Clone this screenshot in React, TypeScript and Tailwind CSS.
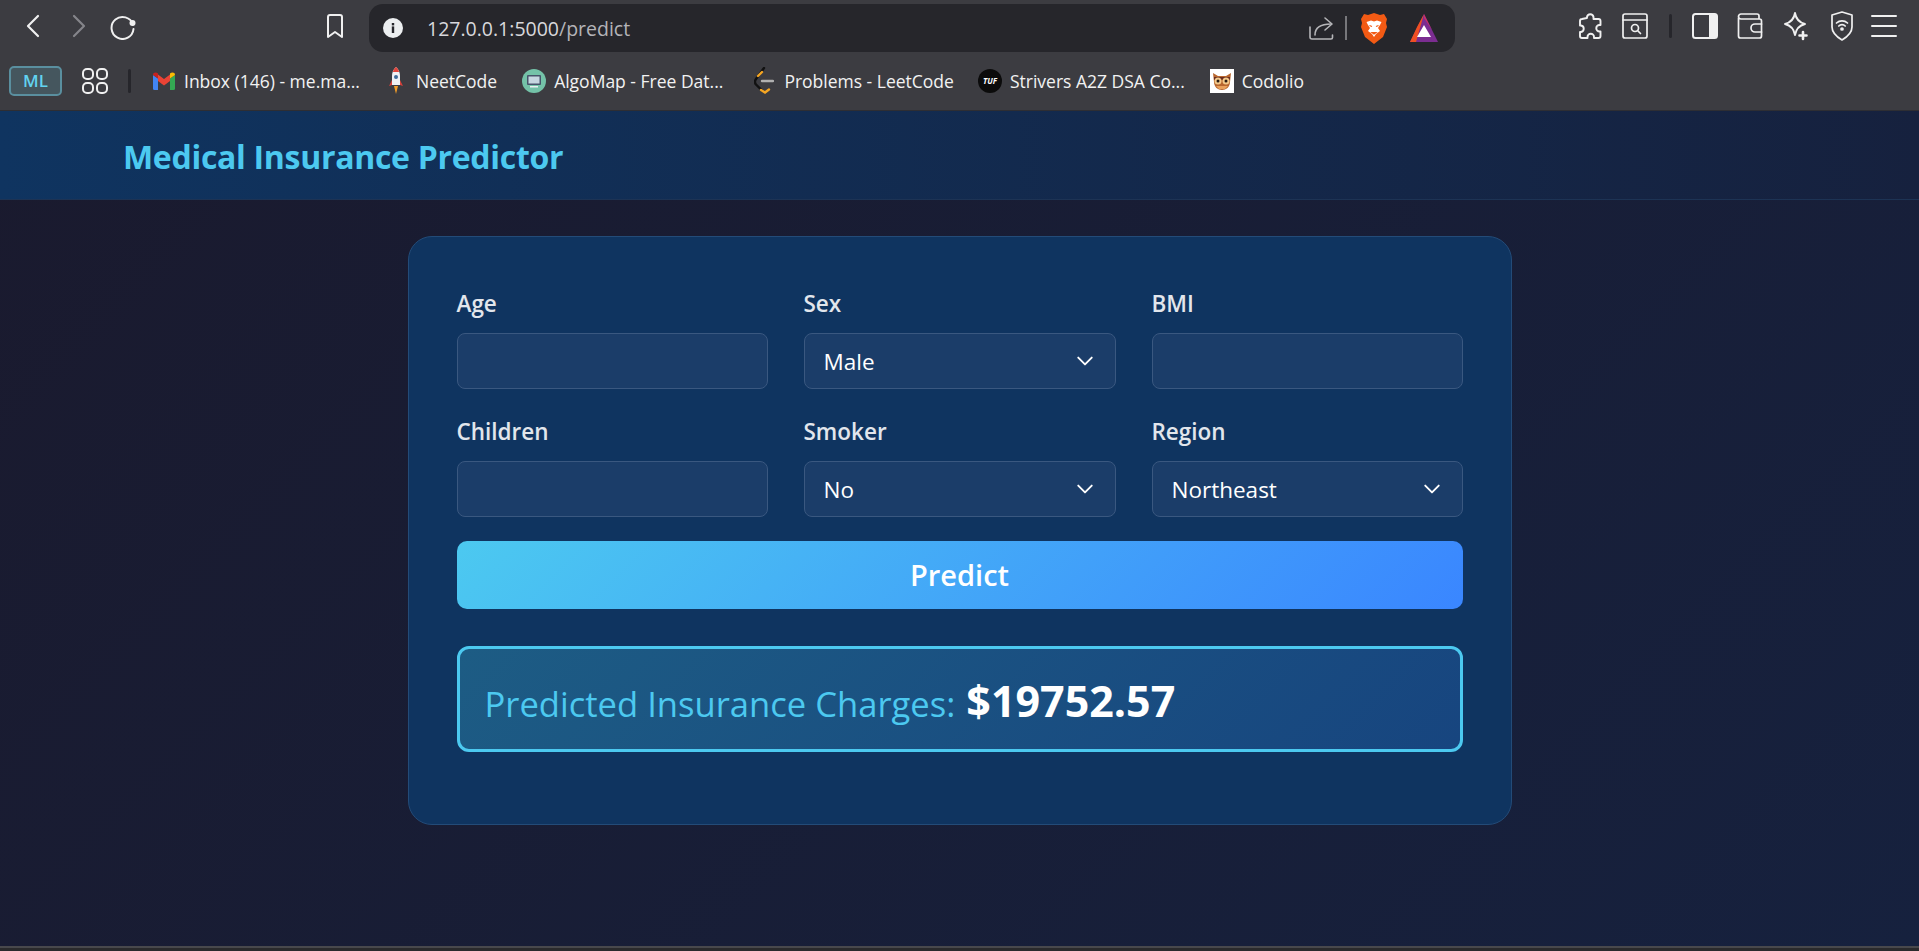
const Chevron = () => (
  <svg width="18" height="18" viewBox="0 0 16 16" fill="none" stroke="#fff" strokeWidth="1.7" strokeLinecap="round" strokeLinejoin="round" className="shrink-0"><path d="M2 5 8 11l6-6" /></svg>
);

function Field({ label, value }: { label: string; value?: string }) {
  return (
    <div className="flex flex-col">
      <label className="h-[29px] text-[22.5px] leading-[29px] font-semibold text-[#e2e6ec] mb-[15px]">{label}</label>
      <div className="h-[56px] rounded-[8px] border border-[#3a5880] bg-[#1b3d69] flex items-center justify-between pl-[19px] pr-[21px]">
        {value ? <span className="text-[22.5px] text-white mt-[2px]">{value}</span> : null}
        {value ? <Chevron /> : null}
      </div>
    </div>
  );
}

function Bookmark({ icon, text, className }: { icon: React.ReactNode; text: string; className: string }) {
  return (
    <div className={`flex items-center gap-[8px] shrink-0 ${className}`}>
      <span className="w-[24px] h-[24px] flex items-center justify-center shrink-0">{icon}</span>
      <span className="text-[17.5px] text-[#f2f2f2] whitespace-nowrap">{text}</span>
    </div>
  );
}

const S = { fill: "none", stroke: "#f0f0f0", strokeWidth: 2, strokeLinecap: "round" as const, strokeLinejoin: "round" as const };

export default function App() {
  return (
    <div className="w-[1919px] h-[951px] overflow-hidden flex flex-col bg-[#1a1c33] font-['Open_Sans','Noto_Sans',sans-serif]">
      {/* browser toolbar */}
      <div className="h-[52px] bg-[#3c3c41] flex items-center shrink-0">
        <div className="flex items-center pl-[22px]">
          <svg width="22" height="26" viewBox="0 0 22 26" {...S} strokeWidth={2.2}><path d="M16 3 6 13l10 10" /></svg>
          <svg width="22" height="26" viewBox="0 0 22 26" {...S} stroke="#85858a" strokeWidth={2.2} className="ml-[24px]"><path d="m6 3 10 10L6 23" /></svg>
          <svg width="28" height="28" viewBox="0 0 28 28" {...S} strokeWidth={2} className="ml-[19px]"><path d="M24 12.500A11 11 0 1 0 24.500 17" /><circle cx="23.500" cy="11" r="3" fill="#f0f0f0" stroke="none" /></svg>
          <svg width="20" height="26" viewBox="0 0 20 26" {...S} strokeWidth={2} className="ml-[188px]"><path d="M3 4a2 2 0 0 1 2-2h10a2 2 0 0 1 2 2v20l-7-5-7 5z" /></svg>
        </div>
        <div className="ml-[24px] w-[1086px] h-[48px] mt-[4px] rounded-[14px] bg-[#26262b] flex items-center shrink-0">
          <svg width="20" height="20" viewBox="0 0 20 20" className="ml-[14px] shrink-0"><circle cx="10" cy="10" r="10" fill="#eceef0" /><rect x="8.800" y="8.400" width="2.400" height="6.600" fill="#26262b" /><rect x="8.800" y="5" width="2.400" height="2.400" fill="#26262b" /></svg>
          <span className="ml-[24px] text-[19.5px] text-[#d8d8dc] mt-[1px]">127.0.0.1:5000<span className="text-[#b4b4b8]">/predict</span></span>
          <div className="ml-auto flex items-center">
            <svg width="26" height="26" viewBox="0 0 26 26" fill="none" stroke="#b5b5b8" strokeWidth="1.6" strokeLinecap="round" strokeLinejoin="round"><path d="M2 12v10a2 2 0 0 0 2 2h19a1.500 1.500 0 0 0 1.500-1.500V20" /><path d="M7 20c0-7 5-11 16-11" /><path d="m17 3 7 6-7 6" /></svg>
            <div className="w-[2px] h-[24px] bg-[#77777b] ml-[11px]" />
            <svg width="26" height="31" viewBox="0 0 26 31" className="ml-[14px]"><path d="M13 0 19 2 23 1 26 6 25 10 26 14 22 24 13 31 4 24 0 14 1 10 0 6 3 1 7 2Z" fill="#f25a14" /><path d="M5.500 9 10 7.500l3 1 3-1L20.500 9 19 12l-2 3 2 3-4 3-2 3-2-3-4-3 2-3-2-3z" fill="#fff" /><path d="M8.500 12.500 11 13.500M17.500 12.500 15 13.500M11 19.500h4l-2 1.500z" stroke="#f25a14" strokeWidth="1.200" fill="#f25a14" /></svg>
            <svg width="28" height="28" viewBox="0 0 28 28" className="ml-[23px] mr-[17px]"><path d="M14 0 28 28H0Z" fill="#7b2d91" /><path d="M14 0 7 13 0 28h6l8-28Z" fill="#f04f23" /><path d="M14 0 22 16 14 4Z" fill="#c62f6a" /><path d="M14 11 21 23H7Z" fill="#fff" /></svg>
          </div>
        </div>
        <div className="flex items-center ml-[122px]">
          <svg width="26" height="28" viewBox="0 0 26 28" {...S} strokeWidth={1.9}><path d="M10 6V5a3.300 3.300 0 0 1 6.500 0v2h5a2 2 0 0 1 2 2v4h-1a3.200 3.200 0 0 0 0 6.500h1V24a2 2 0 0 1-2 2h-4.500v-1a3.200 3.200 0 0 0-6.500 0v1H5a2 2 0 0 1-2-2v-4h1a3.300 3.300 0 0 0 0-6.500H3V9a2 2 0 0 1 2-2z" /></svg>
          <svg width="26" height="28" viewBox="0 0 26 28" {...S} strokeWidth={1.7} className="ml-[19px]"><rect x="1" y="2" width="24" height="24" rx="2" /><path d="M1 8h24" /><circle cx="13" cy="16" r="3.500" /><path d="m16 19 2.500 2.500" /></svg>
          <div className="w-[3px] h-[24px] bg-[#26262b] ml-[21px] rounded-sm" />
          <svg width="26" height="28" viewBox="0 0 26 28" className="ml-[20px]"><rect x="1" y="2" width="24" height="24" rx="2.500" fill="none" stroke="#f0f0f0" strokeWidth="2" /><path d="M17 2h6a2 2 0 0 1 2 2v20a2 2 0 0 1-2 2h-6z" fill="#f0f0f0" /></svg>
          <svg width="26" height="28" viewBox="0 0 26 28" {...S} strokeWidth={1.7} className="ml-[19px]"><path d="M1.500 6v18a2 2 0 0 0 2 2h19a2 2 0 0 0 2-2V9a2 2 0 0 0-2-2H4A2.500 2.500 0 0 1 4 2h16a2 2 0 0 1 2 2v3" /><path d="M24.500 12H18a4 4 0 0 0 0 8h6.500" /></svg>
          <svg width="26" height="30" viewBox="0 0 26 30" {...S} strokeWidth={1.9} className="ml-[20px]"><path d="M12 2c1 6 4 9.500 10 11-6 1.500-9 5-10 11-1-6-4-9.500-10-11 6-1.500 9-5 10-11z" /><path d="M20 21v7M16.500 24.500h7" strokeWidth="2.600" /></svg>
          <svg width="24" height="30" viewBox="0 0 24 30" {...S} strokeWidth={1.7} className="ml-[21px]"><path d="M12 1 22 4v12c0 6-5 10-10 13C7 26 2 22 2 16V4z" /><path d="M6.500 12a8 8 0 0 1 11 0M8.800 15a4.500 4.500 0 0 1 6.400 0" /><circle cx="12" cy="18" r="1" fill="#f0f0f0" /></svg>
          <svg width="26" height="24" viewBox="0 0 26 24" {...S} strokeWidth={2} className="ml-[17px]"><path d="M1 2h24M1 12h24M1 22h24" /></svg>
        </div>
      </div>
      {/* bookmarks bar */}
      <div className="h-[59px] bg-[#3c3c41] border-b border-[#2e2e33] flex items-center shrink-0 pl-[9px]">
        <div className="w-[53px] h-[30px] rounded-[5px] border-2 border-[#5a8f9f] bg-[#45565e] flex items-center justify-center text-[17px] font-semibold text-[#62d3f0]">ML</div>
        <svg width="26" height="26" viewBox="0 0 26 26" fill="none" stroke="#f0f0f0" strokeWidth="2" className="ml-[20px]"><rect x="1" y="1" width="10" height="10" rx="4" /><rect x="15" y="1" width="10" height="10" rx="4" /><rect x="1" y="15" width="10" height="10" rx="4" /><rect x="15" y="15" width="10" height="10" rx="4" /></svg>
        <div className="w-[3px] h-[24px] bg-[#26262b] ml-[20px] rounded-sm" />
        <Bookmark className="ml-[21px]" text="Inbox (146) - me.ma..." icon={<svg width="22" height="18" viewBox="0 0 22 18"><path d="M0 16.500V3l5 3.500V18H1.500A1.500 1.500 0 0 1 0 16.500z" fill="#4285f4" /><path d="M17 18V6.500L22 3v13.500a1.500 1.500 0 0 1-1.500 1.500z" fill="#34a853" /><path d="M5 9V2.500l6 4.500 6-4.500V9l-6 4.500z" fill="#ea4335" /><path d="M17 6.500V1.500C18.500.2 22 0 22 3z" fill="#fbbc04" /><path d="M0 3C0 0 3.500.2 5 1.500v5z" fill="#c5221f" /></svg>} />
        <Bookmark className="ml-[24px]" text="NeetCode" icon={<svg width="16" height="28" viewBox="0 0 16 28"><path d="M8 0c3 2.500 4 6 4 9v9H4V9c0-3 1-6.500 4-9z" fill="#eef0f4" /><path d="M8 0c1.500 1.200 2.600 3 3.100 5H4.900C5.400 3 6.500 1.200 8 0z" fill="#e2453c" /><circle cx="8" cy="10" r="2" fill="#3d6b9a" /><path d="M4 13 1 19l3-1zM12 13l3 6-3-1z" fill="#d6403a" /><path d="M6 19h4l-2 8z" fill="#f39c27" /></svg>} />
        <Bookmark className="ml-[25px]" text="AlgoMap - Free Dat..." icon={<svg width="24" height="24" viewBox="0 0 24 24"><circle cx="12" cy="12" r="12" fill="#74c2a8" /><rect x="5" y="6" width="14" height="10" rx="1" fill="#46546a" /><rect x="6.500" y="7.500" width="11" height="7" fill="#c6d6e0" /><rect x="8" y="17" width="8" height="1.500" fill="#e8f0f0" /></svg>} />
        <Bookmark className="ml-[29px]" text="Problems - LeetCode" icon={<svg width="20" height="28" viewBox="0 0 20 28" fill="none" strokeLinecap="round"><path d="M10 1 2 12c-1.500 2-1.200 4 0 5.500l6 6" stroke="#111" strokeWidth="2.400" /><path d="M4 9l4-4M7 23l4 2.500 4-3" stroke="#f5a623" strokeWidth="2.400" /><path d="M8 14h11" stroke="#b0b0b0" strokeWidth="2.400" /></svg>} />
        <Bookmark className="ml-[24px]" text="Strivers A2Z DSA Co..." icon={<div className="w-[24px] h-[24px] rounded-full bg-[#0b0b0b] flex items-center justify-center text-[8px] italic font-bold text-white leading-none">TUF</div>} />
        <Bookmark className="ml-[25px]" text="Codolio" icon={<svg width="24" height="24" viewBox="0 0 24 24"><rect width="24" height="24" fill="#fff" /><path d="M3 4l5 3h8l5-3-1 9c0 5-4 8-8 8s-8-3-8-8z" fill="#b8662e" /><path d="M4 8h16v3H4z" fill="#6b2d1e" /><circle cx="8" cy="12" r="3.500" fill="#f4c98a" /><circle cx="16" cy="12" r="3.500" fill="#f4c98a" /><circle cx="8" cy="12" r="1.500" fill="#2a1a12" /><circle cx="16" cy="12" r="1.500" fill="#2a1a12" /><path d="M6 17h12l-3 3H9z" fill="#e9a15c" /></svg>} />
      </div>
      {/* page */}
      <div className="flex-1 min-h-0 flex flex-col bg-[linear-gradient(135deg,#1a1a2e,#16213e)]">
        <header className="h-[89px] shrink-0 bg-[linear-gradient(90deg,#0f3460,#16213e)] border-b border-[#1d3354] flex items-center pl-[123px]">
          <h1 className="text-[32px] font-bold text-[#4cc9f0] tracking-[-0.3px] mt-[3px]">Medical Insurance Predictor</h1>
        </header>
        <main className="flex-1 pt-[36px]">
          <div className="w-[1104px] h-[589px] mx-auto rounded-[24px] border border-[#234b78] bg-[#0f3460] px-[48px] pt-[52px]">
            <div className="grid grid-cols-[311px_312px_311px] gap-x-[36px] gap-y-[28px]">
              <Field label="Age" />
              <Field label="Sex" value="Male" />
              <Field label="BMI" />
              <Field label="Children" />
              <Field label="Smoker" value="No" />
              <Field label="Region" value="Northeast" />
            </div>
            <button className="mt-[24px] w-full h-[68px] rounded-[10px] bg-[linear-gradient(135deg,#4cc9f0,#3a86ff)] text-white text-[29px] font-semibold">Predict</button>
            <div className="mt-[37px] h-[106px] rounded-[12px] border-[3px] border-[#4cc9f0] bg-[linear-gradient(135deg,#1d5c84,#17457f)] flex items-baseline pl-[25px] pt-[20px]">
              <span className="text-[34.6px] font-medium text-[#4cc9f0]">Predicted Insurance Charges:</span>
              <span className="ml-[11px] text-[43px] font-bold text-white">$19752.57</span>
            </div>
          </div>
        </main>
        <div className="h-[5px] shrink-0 bg-[#2a2a2c] border-t-2 border-[#48484c]" />
      </div>
    </div>
  );
}
